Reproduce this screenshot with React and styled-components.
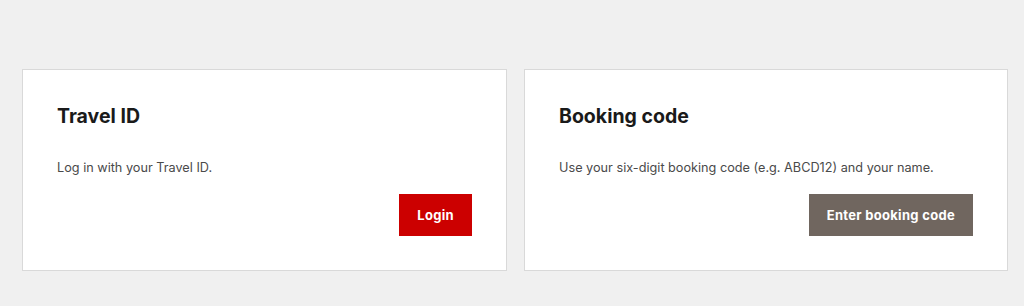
import React from "react";
import styled, { createGlobalStyle } from "styled-components";

const Global = createGlobalStyle`
  html, body { margin: 0; padding: 0; background: #f0f0f0; }
  body { font-family: Inter, "Open Sans", "Liberation Sans", sans-serif; }
`;

const Page = styled.div`
  padding: 69px 17px 35px 22px;
  display: grid;
  grid-template-columns: 485px 484px;
  gap: 17px;
`;

const Card = styled.section`
  background: #fff;
  border: 1px solid #d9d9d9;
  padding: 34px 34px 34px 34px;
  display: flex;
  flex-direction: column;
  box-sizing: border-box;
`;

const Title = styled.h2`
  margin: 0;
  font-size: 19.5px;
  line-height: 24px;
  font-weight: 700;
  color: #1a1a1a;
`;

const Text = styled.p`
  margin: 31px 0 0;
  font-size: 12.7px;
  line-height: 18px;
  color: #4a4a4a;
`;

const Actions = styled.div`
  display: flex;
  justify-content: flex-end;
  margin-top: 17px;
`;

const Button = styled.button`
  border: none;
  height: 42px;
  padding: 0 ${(p) => p.$pad}px;
  background: ${(p) => p.$bg};
  color: #fff;
  font-family: inherit;
  font-size: 13px;
  font-weight: 700;
  letter-spacing: 0.3px;
  cursor: pointer;
`;

export default function App() {
  return (
    <>
      <Global />
      <Page>
        <Card>
          <Title>Travel ID</Title>
          <Text>Log in with your Travel ID.</Text>
          <Actions>
            <Button $bg="#cc0000" $pad={18}>Login</Button>
          </Actions>
        </Card>
        <Card>
          <Title>Booking code</Title>
          <Text>Use your six-digit booking code (e.g. ABCD12) and your name.</Text>
          <Actions>
            <Button $bg="#70665f" $pad={18}>Enter booking code</Button>
          </Actions>
        </Card>
      </Page>
    </>
  );
}
